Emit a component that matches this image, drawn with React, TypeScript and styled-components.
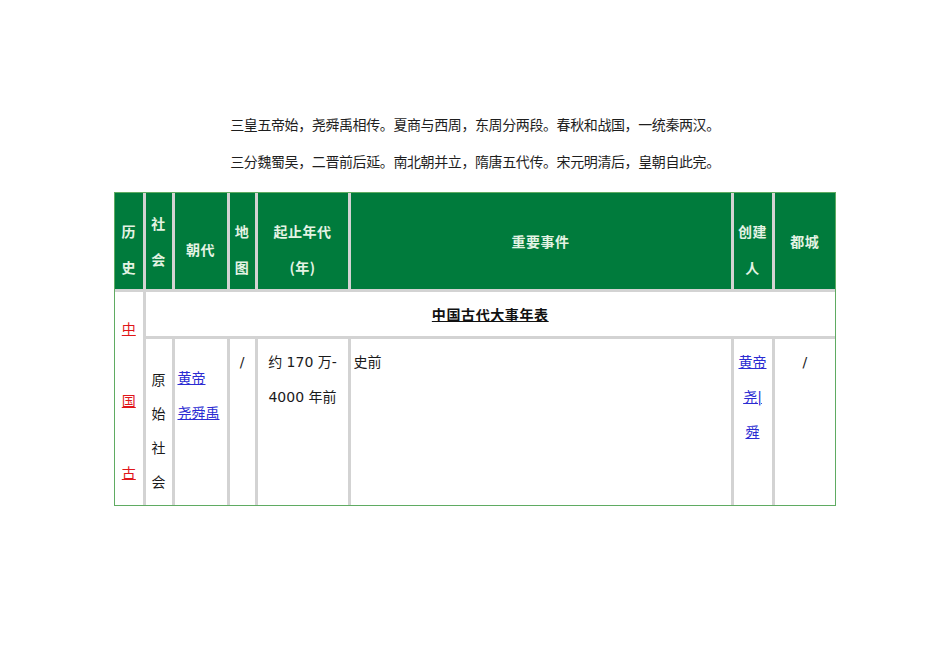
import styled, { createGlobalStyle } from "styled-components";

const GlobalStyle = createGlobalStyle`
  body {
    margin: 0;
    background: #fff;
    font-family: "DejaVu Sans", "Noto Sans CJK SC", sans-serif;
    color: #1e1e1e;
  }
`;

const Page = styled.div`
  padding-top: 114px;
  display: flex;
  flex-direction: column;
  align-items: center;
`;

const Verse = styled.p`
  margin: 0;
  font-family: "Noto Sans CJK SC", sans-serif;
  font-size: 14px;
  line-height: 20px;
  letter-spacing: -0.4px;

  & + & {
    margin-top: 17px;
  }
`;

const Frame = styled.div`
  width: 722px;
  box-sizing: border-box;
  margin-top: 21px;
  border: 1px solid #5fab62;
`;

const Table = styled.table`
  width: 100%;
  table-layout: fixed;
  border-collapse: collapse;
  border-style: hidden;
`;

const HeadRow = styled.tr`
  height: 97px;
`;

const HeadCell = styled.th<{ $drop?: boolean }>`
  background: #007b3c;
  color: #e4f3e4;
  font-family: "Noto Sans CJK SC", sans-serif;
  font-weight: 700;
  font-size: 14px;
  line-height: 36px;
  letter-spacing: 0.5px;
  text-align: center;
  vertical-align: middle;
  border: 3px solid #d3d3d3;
  padding: ${(p) => (p.$drop ? "16px 2px 0" : "0 2px")};
`;

const TitleRow = styled.tr`
  height: 47px;
`;

const TitleCell = styled.td`
  border: 3px solid #d3d3d3;
  text-align: center;
  vertical-align: middle;
  padding: 0;
  font-family: "Noto Sans CJK SC", sans-serif;
  font-weight: 700;
  font-size: 14px;
  letter-spacing: 0.6px;
  color: #111;
  text-decoration: underline;
`;

const BodyRow = styled.tr`
  height: 168px;
`;

const EraCell = styled.td`
  border: 3px solid #d3d3d3;
  vertical-align: middle;
  padding: 6px 0 0;
`;

const EraStack = styled.div`
  display: flex;
  flex-direction: column;
  align-items: center;
  gap: 52px;
  font-size: 14px;
  line-height: 20px;
`;

const DataCell = styled.td<{ $left?: boolean; $top?: number; $lh?: number }>`
  border: 3px solid #d3d3d3;
  vertical-align: top;
  font-size: 14px;
  line-height: ${(p) => p.$lh ?? 35}px;
  color: #1a1a1a;
  text-align: ${(p) => (p.$left ? "left" : "center")};
  padding: ${(p) => p.$top ?? 6.5}px 3px 0;
  word-break: break-all;
`;

const Link = styled.a`
  color: #2b2bd2;
  text-decoration: underline;
`;

const RedLink = styled.a`
  color: #e0161a;
  text-decoration: underline;
`;

const widths = [29, 29, 55, 28, 93, 383, 41, 62];

export default function App() {
  return (
    <>
      <GlobalStyle />
      <Page>
        <Verse>三皇五帝始，尧舜禹相传。夏商与西周，东周分两段。春秋和战国，一统秦两汉。</Verse>
        <Verse>三分魏蜀吴，二晋前后延。南北朝并立，隋唐五代传。宋元明清后，皇朝自此完。</Verse>
        <Frame>
          <Table>
            <colgroup>
              {widths.map((w, i) => (
                <col key={i} style={{ width: w }} />
              ))}
            </colgroup>
            <tbody>
              <HeadRow>
                <HeadCell $drop>历史</HeadCell>
                <HeadCell>社会</HeadCell>
                <HeadCell $drop>朝代</HeadCell>
                <HeadCell $drop>地图</HeadCell>
                <HeadCell $drop>
                  起止年代
                  <br />
                  (年)
                </HeadCell>
                <HeadCell>重要事件</HeadCell>
                <HeadCell $drop>创建人</HeadCell>
                <HeadCell>都城</HeadCell>
              </HeadRow>
              <TitleRow>
                <EraCell rowSpan={2}>
                  <EraStack>
                    <RedLink href="#">中</RedLink>
                    <RedLink href="#">国</RedLink>
                    <RedLink href="#">古</RedLink>
                  </EraStack>
                </EraCell>
                <TitleCell colSpan={7}>中国古代大事年表</TitleCell>
              </TitleRow>
              <BodyRow>
                <DataCell $top={24} $lh={34.3}>原始社会</DataCell>
                <DataCell $left $top={22}>
                  <Link href="#">黄帝</Link>
                  <br />
                  <Link href="#">尧舜禹</Link>
                </DataCell>
                <DataCell>/</DataCell>
                <DataCell>
                  约 170 万-
                  <br />
                  4000 年前
                </DataCell>
                <DataCell $left>史前</DataCell>
                <DataCell>
                  <Link href="#">黄帝</Link>
                  <br />
                  <Link href="#">尧|</Link>
                  <br />
                  <Link href="#">舜</Link>
                </DataCell>
                <DataCell>/</DataCell>
              </BodyRow>
            </tbody>
          </Table>
        </Frame>
      </Page>
    </>
  );
}
